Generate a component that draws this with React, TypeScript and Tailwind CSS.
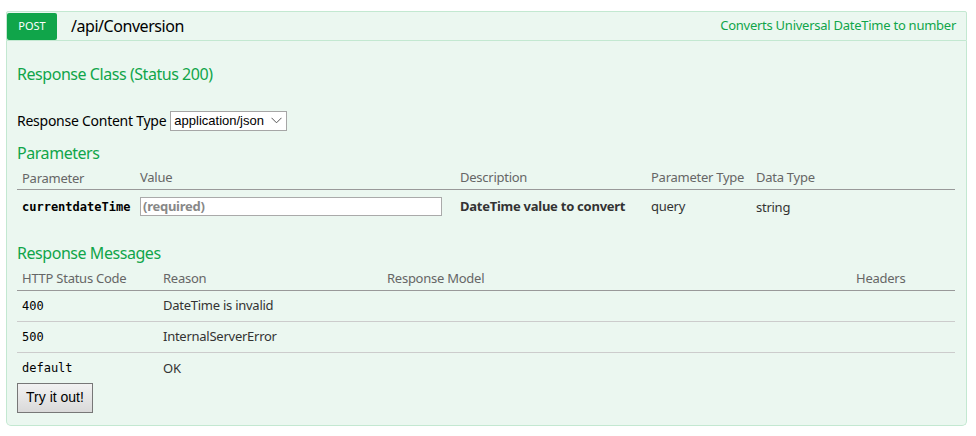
import React from "react";

const sans = "font-['Noto_Sans',sans-serif] tracking-[-0.016em]";
const heading = "text-[16px] leading-[20px] tracking-[-0.028em] text-[#10a54a]";
const mono = "font-['DejaVu_Sans_Mono',monospace] tracking-normal";

const params = [
  { name: "currentdateTime", description: "DateTime value to convert", paramType: "query", dataType: "string" },
];

const messages = [
  { code: "400", reason: "DateTime is invalid" },
  { code: "500", reason: "InternalServerError" },
  { code: "default", reason: "OK" },
];

export default function App() {
  return (
    <div className={`${sans} h-[436px] w-[976px] bg-white pt-[11px] pl-[6px] text-[#333]`}>
      <div className="w-[961px]">
        <div className="flex h-[30px] items-center justify-between rounded-t-[2px] border border-[#c3e8d1] bg-[#ebf7f0]">
          <div className="flex items-center">
            <span className="flex h-[27px] w-[50px] items-center justify-center rounded-[2px] bg-[#10a54a] text-[11px] tracking-normal text-white">
              POST
            </span>
            <span className="ml-[14px] text-[16px] tracking-[-0.028em] text-black">/api/Conversion</span>
          </div>
          <span className="mr-[10px] text-[13px] text-[#10a54a]">Converts Universal DateTime to number</span>
        </div>

        <div className="h-[385px] rounded-b-[5px] border border-t-0 border-[#c3e8d1] bg-[#ebf7f0] px-[10px]">
          <h4 className={`pt-[23px] ${heading}`}>Response Class (Status 200)</h4>

          <div className="mt-[26px] flex items-center text-[14px] text-black">
            <span>Response Content Type</span>
            <span className="ml-[4px] flex h-[20px] w-[117px] items-center justify-between border border-[#a6a6a6] bg-white pl-[3px] pr-[4px] font-['Liberation_Sans',sans-serif] text-[13px] tracking-normal">
              application/json
              <svg width="11" height="7" viewBox="0 0 11 7" fill="none" stroke="#555" strokeWidth="1">
                <path d="M0.5 0.8 L5.5 5.8 L10.5 0.8" />
              </svg>
            </span>
          </div>

          <h4 className={`mt-[12px] ${heading}`}>Parameters</h4>
          <table className="mt-[4px] w-[938px] border-collapse text-[13px]">
            <thead>
              <tr className="border-b border-[#999] text-left text-[#666]">
                <th className="w-[118px] pt-[2px] pb-0 pl-[5px] font-normal">Parameter</th>
                <th className="w-[320px] px-[5px] font-normal">Value</th>
                <th className="w-[191px] pl-[5px] font-normal">Description</th>
                <th className="w-[105px] pl-[5px] font-normal">Parameter Type</th>
                <th className="pl-[5px] font-normal">Data Type</th>
              </tr>
            </thead>
            <tbody>
              {params.map((p) => (
                <tr key={p.name} className="text-[#333]">
                  <td className={`${mono} pt-[8px] pb-[5px] pl-[5px] text-[12px] font-bold text-black`}>{p.name}</td>
                  <td className="px-[5px] pt-[3px]">
                    <div className="flex h-[19px] w-[302px] items-center border border-[#aaa] bg-white px-[2px] font-bold text-[#888]">
                      (required)
                    </div>
                  </td>
                  <td className="pl-[5px] pt-[3px] font-bold">{p.description}</td>
                  <td className="pl-[5px] pt-[3px]">{p.paramType}</td>
                  <td className="pl-[5px] pt-[5px]">{p.dataType}</td>
                </tr>
              ))}
            </tbody>
          </table>

          <h4 className={`mt-[22px] ${heading}`}>Response Messages</h4>
          <table className="mt-[4px] w-[938px] border-collapse text-[13px]">
            <thead>
              <tr className="border-b border-[#999] text-left text-[#666]">
                <th className="w-[141px] py-[2px] pl-[5px] font-normal">HTTP Status Code</th>
                <th className="w-[224px] pl-[5px] font-normal">Reason</th>
                <th className="w-[469px] pl-[5px] font-normal">Response Model</th>
                <th className="pl-[5px] font-normal">Headers</th>
              </tr>
            </thead>
            <tbody>
              {messages.map((m, i) => (
                <tr key={m.code} className={i < messages.length - 1 ? "border-b border-[#ccc]" : ""}>
                  <td className={`${mono} h-[31px] pl-[5px] text-[12px] text-black`}>{m.code}</td>
                  <td className="pl-[5px]">{m.reason}</td>
                  <td />
                  <td />
                </tr>
              ))}
            </tbody>
          </table>

          <button
            type="button"
            className="-mt-[1px] h-[30px] w-[76px] border border-[#777] bg-gradient-to-b from-[#f2f2f2] to-[#d9d9d9] font-['Liberation_Sans',sans-serif] text-[14px] tracking-normal text-black"
          >
            Try it out!
          </button>
        </div>
      </div>
    </div>
  );
}
